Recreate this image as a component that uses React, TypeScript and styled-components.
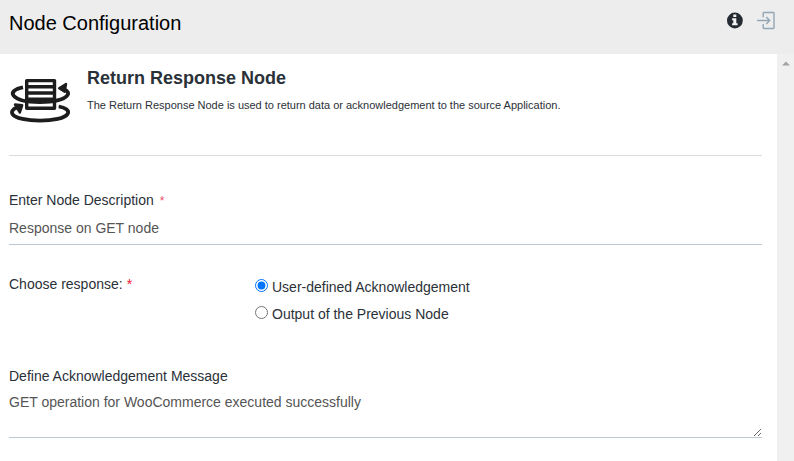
import React, { useState } from "react";
import styled, { createGlobalStyle } from "styled-components";

const GlobalStyle = createGlobalStyle`
  * { box-sizing: border-box; }
  body { margin: 0; background: #fff; font-family: "Liberation Sans", Arial, sans-serif; color: #2b3138; }
`;

const Panel = styled.div`
  display: flex;
  flex-direction: column;
  height: 461px;
  overflow: hidden;
`;

const Header = styled.header`
  display: flex;
  flex: none;
  align-items: flex-start;
  justify-content: space-between;
  height: 54px;
  padding: 11px 19px 0 9px;
  background: #ededed;
`;

const Title = styled.h1`
  margin: 0;
  font-size: 20px;
  font-weight: 400;
  line-height: 24px;
  color: #000;
`;

const Actions = styled.div`
  display: flex;
  gap: 13px;
  svg { display: block; }
`;

const Body = styled.div`
  display: flex;
  flex: 1;
`;

const Content = styled.main`
  flex: 1;
  padding: 0 15px 0 9px;
`;

const Scrollbar = styled.div`
  width: 17px;
  padding: 7px 0 0 5px;
  background: #f0f0f0;
  svg { display: block; }
`;

const Intro = styled.section`
  display: flex;
  gap: 16px;
  height: 102px;
  padding-top: 13px;
  border-bottom: 1px solid #dcdcdc;
`;

const NodeIcon = styled.svg`
  flex: none;
  width: 62px;
  height: 60px;
  margin-top: 3px;
`;

const NodeName = styled.h2`
  margin: 0;
  font-size: 18px;
  line-height: 22px;
`;

const Summary = styled.p`
  margin: 9px 0 0;
  font-size: 11px;
  line-height: 14px;
  letter-spacing: -0.005px;
  white-space: nowrap;
`;

const Label = styled.label`
  display: block;
  font-size: 14px;
  line-height: 18px;
  white-space: nowrap;
`;

const Required = styled.span<{ $soft?: boolean }>`
  margin-left: ${(p) => (p.$soft ? 6 : 4)}px;
  font-size: ${(p) => (p.$soft ? 12 : 14)}px;
  color: ${(p) => (p.$soft ? "#e8506c" : "#f0142f")};
`;

const Field = styled.div`
  padding-top: 35px;
`;

const Input = styled.input`
  display: block;
  width: 100%;
  height: 35px;
  padding: 1px 0 0;
  border: 0;
  border-bottom: 1px solid #bfc6d6;
  outline: 0;
  font: 14px "Liberation Sans", Arial, sans-serif;
  color: #555;
`;

const Choice = styled.div`
  display: grid;
  grid-template-columns: 246px 1fr;
  height: 92px;
  padding-top: 30px;
`;

const Options = styled.div`
  display: flex;
  flex-direction: column;
  gap: 9px;
  padding-top: 3px;
`;

const Option = styled.label`
  display: flex;
  gap: 4px;
  font-size: 14px;
  line-height: 18px;
`;

const Radio = styled.input`
  width: 13px;
  height: 13px;
  margin: 1px 0 0;
`;

const Message = styled.textarea`
  display: block;
  width: 100%;
  height: 53px;
  padding: 9px 0 0;
  border: 0;
  border-bottom: 1px solid #bdc8d1;
  outline: 0;
  font: 14px "Liberation Sans", Arial, sans-serif;
  color: #555;
  resize: vertical;
`;

const MessageField = styled.div`
  padding-top: 30px;
`;

const InfoIcon = () => (
  <svg width="17" height="18" viewBox="0 0 17 18">
    <circle cx="7.9" cy="9.5" r="7.9" fill="#252b32" />
    <path d="M6.3 3.5h3v2.4h-3zM5.1 7.2h4.2v5h1.3v2H5.1v-2h1.2v-3H5.1z" fill="#f4f4f4" />
  </svg>
);

const ExitIcon = () => (
  <svg width="18" height="19" viewBox="0 0 18 19" fill="none" stroke="#91a6b6" strokeWidth="1.4">
    <path d="M6.2 6.3V2.2q0-.7.7-.7h9.4q.7 0 .7.7v14.6q0 .7-.7.7H6.9q-.7 0-.7-.7V13M0 9.5h12.4M9.3 6.1l3.4 3.4-3.4 3.4" />
  </svg>
);

const ResponseIcon = () => (
  <NodeIcon viewBox="0 0 62 60" fill="none" stroke="#1d1d1d" strokeWidth="3.4">
    <path d="M17.7 10.6h27.8v27.6H17.7zM17.7 16.7h27.8M17.7 23h27.8M17.7 29.3h27.8" strokeLinejoin="round" />
    <path d="M14 17.3C6 18.9 1.9 22 4.6 25.6 12 34.5 50 34 57.8 26c2.6-2.7 1-5-2.3-6.6" strokeWidth="3.8" />
    <path d="M49.7 36.5c6.7 1.1 10.8 3.6 9 7.2C53.5 53 8.5 53 3.4 43.8c-1.3-2.6.6-4.6 4.5-6.2" strokeWidth="3.8" />
    <path d="M50.2 18.2 57 14l-1.3 7.8zM50.5 17l5.3 5M6 34.5l7.2.8-2.3 7.2z" fill="#1d1d1d" strokeWidth="2.4" strokeLinejoin="round" />
  </NodeIcon>
);

export default function App() {
  const [choice, setChoice] = useState("user");
  return (
    <Panel>
      <GlobalStyle />
      <Header>
        <Title>Node Configuration</Title>
        <Actions>
          <InfoIcon />
          <ExitIcon />
        </Actions>
      </Header>
      <Body>
        <Content>
          <Intro>
            <ResponseIcon />
            <div>
              <NodeName>Return Response Node</NodeName>
              <Summary>
                The Return Response Node is used to return data or acknowledgement to the source Application.
              </Summary>
            </div>
          </Intro>
          <Field>
            <Label htmlFor="description">
              Enter Node Description<Required $soft>*</Required>
            </Label>
            <Input id="description" defaultValue="Response on GET node" />
          </Field>
          <Choice>
            <Label as="div">
              Choose response:<Required>*</Required>
            </Label>
            <Options>
              <Option>
                <Radio type="radio" name="response" checked={choice === "user"} onChange={() => setChoice("user")} />
                User-defined Acknowledgement
              </Option>
              <Option>
                <Radio type="radio" name="response" checked={choice === "previous"} onChange={() => setChoice("previous")} />
                Output of the Previous Node
              </Option>
            </Options>
          </Choice>
          <MessageField>
            <Label htmlFor="message">Define Acknowledgement Message</Label>
            <Message id="message" defaultValue="GET operation for WooCommerce executed successfully" />
          </MessageField>
        </Content>
        <Scrollbar>
          <svg width="8" height="5" viewBox="0 0 8 5">
            <path d="M0 4.5 4 .5l4 4z" fill="#a3a3a3" />
          </svg>
        </Scrollbar>
      </Body>
    </Panel>
  );
}
